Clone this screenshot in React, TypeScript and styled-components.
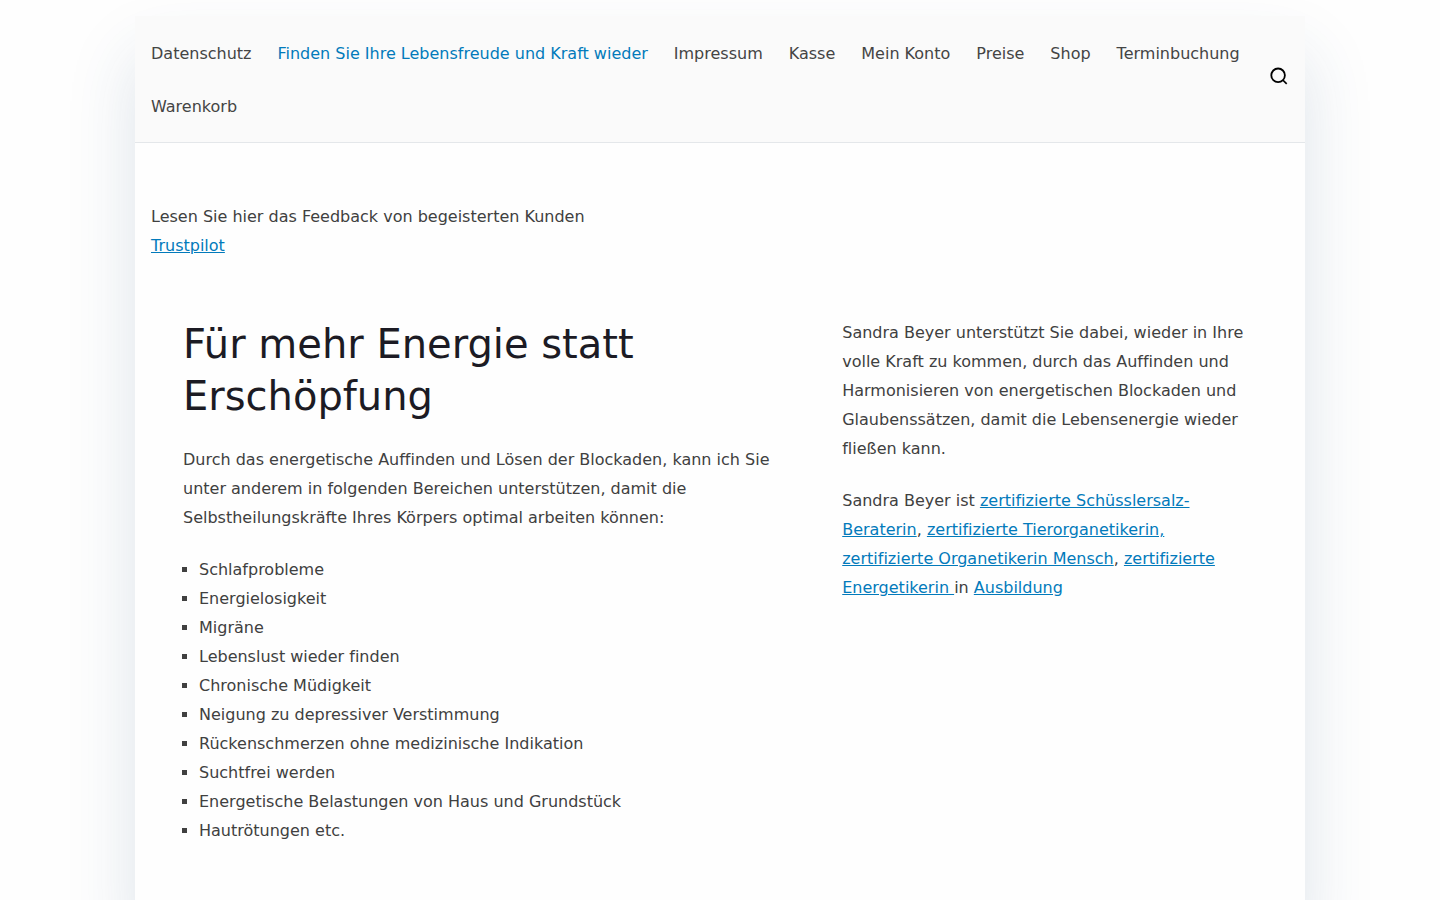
import React from "react";
import styled, { createGlobalStyle } from "styled-components";

const GlobalStyle = createGlobalStyle`
  *, *::before, *::after { box-sizing: border-box; }
  body {
    margin: 0;
    background: #fefefe;
    color: #404040;
    font-family: "DejaVu Sans", sans-serif;
    font-size: 16px;
    font-variant-ligatures: none;
    line-height: 29px;
  }
`;

const Page = styled.div`
  max-width: 1170px;
  min-height: 100vh;
  margin: 16px auto 0;
  background: #fefefe;
  box-shadow: 0 40px 64px rgba(40, 80, 120, 0.15);
`;

const Header = styled.header`
  display: flex;
  align-items: center;
  justify-content: space-between;
  padding: 11px 16px 9px;
  background: #fafafa;
  border-bottom: 1px solid #e4e7ea;
`;

const Menu = styled.ul`
  display: flex;
  flex-wrap: wrap;
  column-gap: 26px;
  margin: 0;
  padding: 0;
  list-style: none;
`;

const MenuItem = styled.li`
  padding: 12px 0;
`;

const MenuLink = styled.a<{ $current?: boolean }>`
  color: ${({ $current }) => ($current ? "#027abb" : "#444444")};
  text-decoration: none;
`;

const SearchButton = styled.button`
  display: flex;
  flex: none;
  padding: 0 0 8px;
  border: 0;
  background: none;
  color: #000000;
  cursor: pointer;
`;

const Content = styled.main`
  padding: 59px 16px;
`;

const Feedback = styled.p`
  margin: 0 0 58px;
`;

const Columns = styled.div`
  display: grid;
  grid-template-columns: 62fr 41fr;
  column-gap: 32px;
  padding: 0 32px;
`;

const Title = styled.h1`
  margin: 0 0 23px;
  color: #1c1b24;
  font-size: 40px;
  font-weight: 400;
  line-height: 52px;
`;

const Paragraph = styled.p`
  margin: 0 0 23px;
`;

const TopicList = styled.ul`
  margin: 0;
  padding: 0 0 0 16px;
  list-style: square;
`;

const TextLink = styled.a`
  color: #027abb;
  text-decoration: underline;
`;

const menu = [
  "Datenschutz",
  "Finden Sie Ihre Lebensfreude und Kraft wieder",
  "Impressum",
  "Kasse",
  "Mein Konto",
  "Preise",
  "Shop",
  "Terminbuchung",
  "Warenkorb",
];

const topics = [
  "Schlafprobleme",
  "Energielosigkeit",
  "Migräne",
  "Lebenslust wieder finden",
  "Chronische Müdigkeit",
  "Neigung zu depressiver Verstimmung",
  "Rückenschmerzen ohne medizinische Indikation",
  "Suchtfrei werden",
  "Energetische Belastungen von Haus und Grundstück",
  "Hautrötungen etc.",
];

export default function App() {
  return (
    <>
      <GlobalStyle />
      <Page>
        <Header>
          <nav aria-label="Hauptmenü">
            <Menu>
              {menu.map((label, i) => (
                <MenuItem key={label}>
                  <MenuLink href="#" $current={i === 1}>{label}</MenuLink>
                </MenuItem>
              ))}
            </Menu>
          </nav>
          <SearchButton type="button" aria-label="Suche">
            <svg width="20" height="20" viewBox="0 0 20 20" fill="none" stroke="currentColor">
              <circle cx="9.1" cy="9.3" r="6.8" strokeWidth="1.8" />
              <path d="M13.8 14l3.9 3.9" strokeWidth="1.7" />
            </svg>
          </SearchButton>
        </Header>
        <Content>
          <Feedback>
            Lesen Sie hier das Feedback von begeisterten Kunden
            <br />
            <TextLink href="#">Trustpilot</TextLink>
          </Feedback>
          <Columns>
            <section>
              <Title>Für mehr Energie statt Erschöpfung</Title>
              <Paragraph>
                Durch das energetische Auffinden und Lösen der Blockaden, kann ich Sie unter anderem in
                folgenden Bereichen unterstützen, damit die Selbstheilungskräfte Ihres Körpers optimal
                arbeiten können:
              </Paragraph>
              <TopicList>
                {topics.map((topic) => (
                  <li key={topic}>{topic}</li>
                ))}
              </TopicList>
            </section>
            <section>
              <Paragraph>
                Sandra Beyer unterstützt Sie dabei, wieder in Ihre volle Kraft zu kommen, durch das
                Auffinden und Harmonisieren von energetischen Blockaden und Glaubenssätzen, damit die
                Lebensenergie wieder fließen kann.
              </Paragraph>
              <Paragraph>
                Sandra Beyer ist <TextLink href="#">zertifizierte Schüsslersalz-Beraterin</TextLink>,{" "}
                <TextLink href="#">zertifizierte Tierorganetikerin,</TextLink>{" "}
                <TextLink href="#">zertifizierte Organetikerin Mensch</TextLink>,{" "}
                <TextLink href="#">zertifizierte Energetikerin </TextLink>in{" "}
                <TextLink href="#">Ausbildung</TextLink>
              </Paragraph>
            </section>
          </Columns>
        </Content>
      </Page>
    </>
  );
}
